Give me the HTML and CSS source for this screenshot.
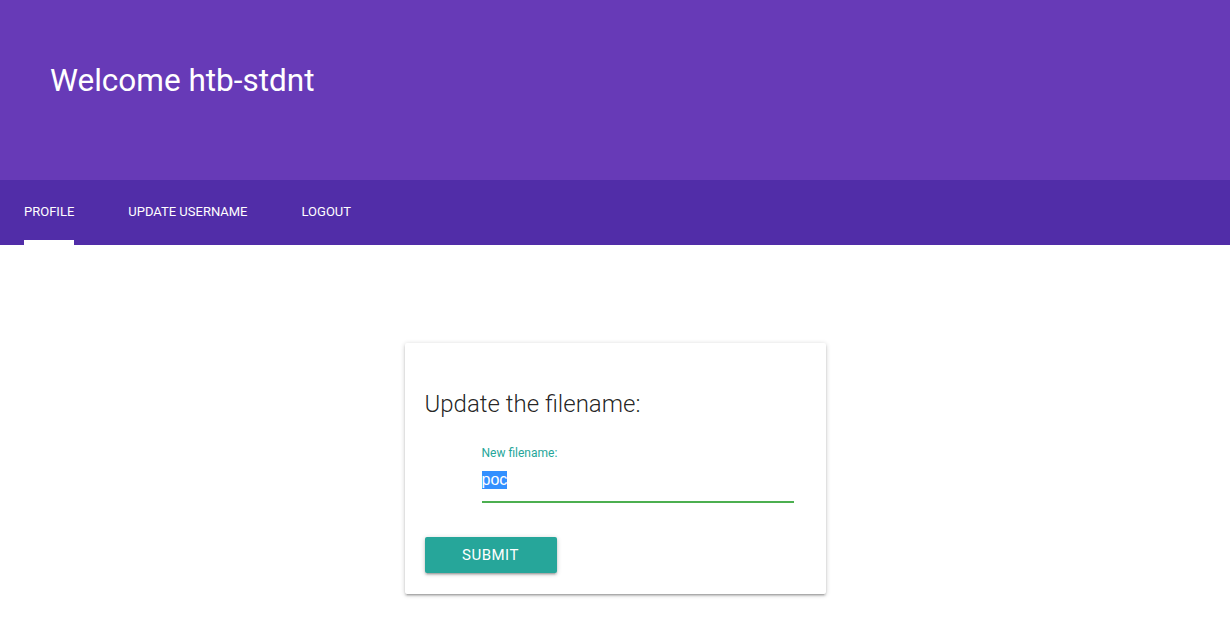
FILE: index.html
```html
<!DOCTYPE html>
<html>
<head>
<meta charset="utf-8">
<link rel="stylesheet" href="styles.css">
</head>
<body>
<header class="hero">
  <h1 class="hero-title">Welcome htb-stdnt</h1>
</header>
<nav class="tabs">
  <a class="tab active">PROFILE</a>
  <a class="tab">UPDATE USERNAME</a>
  <a class="tab">LOGOUT</a>
</nav>
<main class="main">
  <section class="card">
    <h5 class="card-title">Update the filename:</h5>
    <div class="field">
      <label class="field-label">New filename:</label>
      <div class="field-input"><span class="sel">poc</span></div>
    </div>
    <button class="btn">SUBMIT</button>
  </section>
</main>
</body>
</html>
```
FILE: styles.css
```css
html, body { margin: 0; padding: 0; }
body {
  font-family: Roboto, "Noto Sans", sans-serif;
  background: #fff;
  color: rgba(0,0,0,0.87);
}
.hero {
  background: #673ab7;
  height: 180px;
  padding: 0 50px;
  box-sizing: border-box;
}
.hero-title {
  margin: 0;
  padding-top: 60px;
  font-size: 31.5px;
  font-weight: 400;
  color: #fff;
  line-height: 42px;
}
.tabs {
  background: #512da8;
  height: 65px;
  display: flex;
  gap: 54px;
  padding-left: 24px;
}
.tab {
  position: relative;
  color: #fff;
  font-size: 13px;
  line-height: 63px;
  height: 65px;
  text-transform: uppercase;
}
.tab.active::after {
  content: "";
  position: absolute;
  left: 0; right: 0; bottom: 0;
  height: 5px;
  background: #fff;
}
.main {
  display: flex;
  justify-content: center;
  padding-top: 98px;
  padding-bottom: 20px;
}
.card {
  width: 421px;
  box-sizing: border-box;
  padding: 45px 20px 21px;
  background: #fff;
  border-radius: 2px;
  box-shadow: 0 2px 2px 0 rgba(0,0,0,.14), 0 3px 1px -2px rgba(0,0,0,.12), 0 1px 5px 0 rgba(0,0,0,.2);
}
.card-title {
  margin: 0;
  font-size: 24px;
  font-weight: 300;
  line-height: 32px;
  color: rgba(0,0,0,0.87);
}
.field {
  margin: 25px 12px 0 57px;
}
.field-label {
  display: block;
  font-size: 12px;
  color: #26a69a;
  line-height: 16px;
}
.field-input {
  margin-top: 2px;
  height: 38px;
  border-bottom: 2px solid #4caf50;
  font-size: 16px;
  line-height: 33px;
  color: rgba(0,0,0,0.87);
}
.sel {
  background: #3390ff;
  color: #fff;
  line-height: 18px;
  display: inline-block;
  font-family: "Liberation Sans", Arial, sans-serif;
}
.btn {
  margin-top: 34px;
  display: block;
  width: 132px;
  height: 36px;
  border: none;
  border-radius: 2px;
  background: #26a69a;
  color: #fff;
  font-family: Roboto, sans-serif;
  font-size: 15px;
  letter-spacing: .5px;
  box-shadow: 0 2px 2px 0 rgba(0,0,0,.14), 0 3px 1px -2px rgba(0,0,0,.12), 0 1px 5px 0 rgba(0,0,0,.2);
}
```
